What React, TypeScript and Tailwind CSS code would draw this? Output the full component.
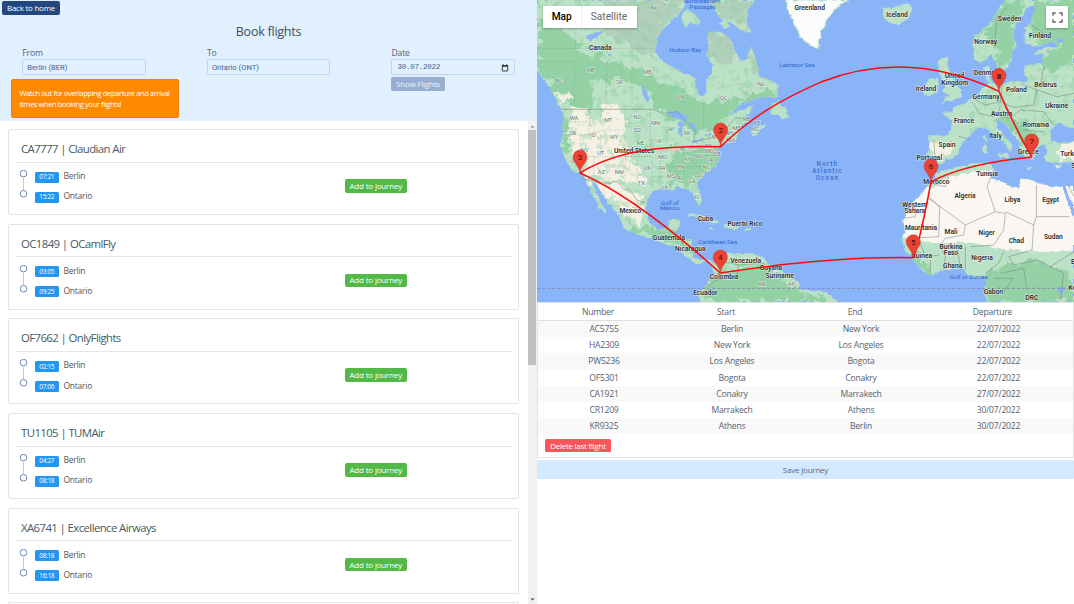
import React from "react";

type Flight = { code: string; airline: string; dep: string; arr: string };

const flights: Flight[] = [
  { code: "CA7777", airline: "Claudian Air", dep: "07:21", arr: "15:22" },
  { code: "OC1849", airline: "OCamlFly", dep: "03:05", arr: "09:25" },
  { code: "OF7662", airline: "OnlyFlights", dep: "02:15", arr: "07:06" },
  { code: "TU1105", airline: "TUMAir", dep: "04:27", arr: "08:18" },
  { code: "XA6741", airline: "Excellence Airways", dep: "08:18", arr: "16:18" },
];

const journey = [
  ["AC5755", "Berlin", "New York", "22/07/2022"],
  ["HA2309", "New York", "Los Angeles", "22/07/2022"],
  ["PW5236", "Los Angeles", "Bogota", "22/07/2022"],
  ["OF5301", "Bogota", "Conakry", "22/07/2022"],
  ["CA1921", "Conakry", "Marrakech", "27/07/2022"],
  ["CR1209", "Marrakech", "Athens", "30/07/2022"],
  ["KR9325", "Athens", "Berlin", "30/07/2022"],
];

function Stop({ time, city }: { time: string; city: string }) {
  return (
    <div className="flex h-[20.2px] items-start">
      <span className="mt-[1.5px] flex h-[11px] w-[24.5px] items-center justify-center rounded-[1.5px] bg-[#2196f3] text-[6.5px] tracking-[-0.35px] text-white">
        {time}
      </span>
      <span className="ml-[4.5px] text-[8.5px] leading-[12px] tracking-[-0.25px] text-[#565656]">{city}</span>
    </div>
  );
}

function FlightCard({ f }: { f: Flight }) {
  return (
    <article className="mb-[8.7px] h-[86px] shrink-0 rounded-[2px] border border-[#e3e3e3] bg-white px-[6px]">
      <h2 className="h-[32.5px] border-b border-[#e6e6e6] pl-[6px] pt-[11px] text-[11.4px] leading-[16px] tracking-[-0.6px] text-[#455a64]">
        {f.code} | {f.airline}
      </h2>
      <div className="flex pt-[7.5px]">
        <svg className="ml-[4px] h-[30px] w-[9px]" viewBox="0 0 9 30" fill="white" stroke="#6b86b5">
          <path d="M4.5 8V20" stroke="#c9c9c9" />
          <circle cx="4.5" cy="3.6" r="3.3" />
          <circle cx="4.5" cy="23.8" r="3.3" />
        </svg>
        <div className="ml-[6.5px] w-[310px]">
          <Stop time={f.dep} city="Berlin" />
          <Stop time={f.arr} city="Ontario" />
        </div>
        <button className="mt-[9px] h-[13.5px] w-[62.5px] rounded-[2px] bg-[#52b947] text-[8px] font-medium leading-[12px] tracking-[-0.18px] text-white">
          Add to journey
        </button>
      </div>
    </article>
  );
}

function Field({ label, children }: { label: string; children: React.ReactNode }) {
  return (
    <div className="w-[184.6px] shrink-0">
      <div className="h-[12px] text-[8.6px] leading-[12px] tracking-[-0.15px] text-[#566573]">{label}</div>
      {children}
    </div>
  );
}

const inputClass =
  "flex h-[16px] w-[123.5px] items-center rounded-[1.5px] border border-[#c2d5e8] pl-[4px] pt-[1px] text-[7.6px] text-[#486491]";

const land = [
  "M0 0H450L440 20L420 50L385 80L370 98L360 120L355 160L375 185L405 200L430 215L475 235L480 275L495 293L508 270L505 240L525 220V190L510 170L515 140L512 95H550L570 110L585 125L595 150L610 180L630 175L640 140L652 160L660 190L665 225L700 240L725 255L720 290L670 292L640 300L600 320L575 345L610 330L650 318L642 338L620 350L635 365L612 378L604 398L600 415L580 425L548 440L540 455L545 480L533 500L510 520L487 540L480 552L490 575L495 605L485 618L475 600L470 580L450 568L420 562L405 572L380 565L345 575L330 600L325 630L340 670L365 690L390 685L395 662L430 656L426 685L410 702L430 713L465 722L462 745L470 778L495 780L520 777L530 795L528 808L517 792L500 785L490 792L470 787L445 768L435 757L420 740L390 735L370 725L335 715L300 705L264 687L255 665L240 640L215 610L195 580L178 552L163 545L180 582L195 612L212 636L205 640L186 622L168 590L153 556L140 535L130 520L108 515L100 500L82 475L72 440L75 400L80 360L75 335L60 308L40 268L22 240L0 213Z",
  "M515 0H655L632 27L628 60L641 98L622 94L600 82L580 65L560 68L540 42L530 20Z",
  "M432 45L449 27L470 40L493 65L478 75L460 65L450 80L438 70Z",
  "M545 70L568 64L580 80L562 86Z",
  "M642 390L690 369L684 382L650 408Z",
  "M700 322L722 302L730 318L746 322L755 350L738 358L722 344L702 345Z",
  "M450 645L480 640L505 650L530 660L548 669L525 670L500 656Z M562 672L590 673L612 682L590 688L563 683Z M622 685L641 685V691L622 690Z M516 681L532 685L522 690Z",
  "M530 795L542 775L570 755L590 760L640 760L680 772L695 795L725 808L760 828L789 850L784 868L805 872L860 876L892 895L905 906H490L486 885L500 865L510 850L530 825Z",
  "M1034 23L1062 25L1088 14L1116 10L1130 32L1114 55L1082 76L1054 67L1038 47Z",
  "M1204 177L1236 169L1231 195L1246 228L1269 265L1274 288L1248 302L1210 308L1237 286L1214 273L1228 258L1218 240L1205 215Z",
  "M1176 236L1203 234V277L1168 291L1160 266Z",
  "M1611 0H1404L1379 40L1349 80L1314 105L1307 140L1313 178L1334 190L1362 166L1375 180L1384 213L1402 216L1420 190L1424 158L1440 137L1429 110L1434 78L1454 50L1469 23L1498 14L1484 65L1464 85L1463 130L1494 142L1544 125L1564 137L1503 150L1493 165L1520 158L1518 191L1464 195L1458 221L1474 235L1463 250L1444 242L1408 250L1390 256L1364 248L1349 237L1338 205L1360 192L1358 225L1366 246L1340 262L1304 292L1284 310L1254 320L1244 336L1214 338L1244 360L1242 390L1230 406H1174L1177 440L1168 474L1180 485L1208 493L1238 478L1264 462L1268 440L1286 420L1304 397L1324 382L1350 386L1370 409L1402 427L1420 455L1428 441L1405 410L1378 380L1380 358L1406 373L1424 400L1443 423L1450 451L1462 472L1492 476L1502 443L1522 432L1534 457L1520 470L1530 485L1562 488L1611 486V424L1570 429L1539 420L1538 394L1563 369L1611 389Z",
  "M1182 545L1204 520L1235 507L1304 491L1359 488L1368 505L1361 533L1404 549L1445 568L1454 535L1484 544L1508 552L1564 560H1611V906H1355L1339 880L1350 852L1344 830L1324 835L1294 825L1274 804L1224 810L1184 825L1160 817L1132 785L1104 750L1094 720L1104 697L1099 660L1114 630L1134 600L1156 578Z",
  "M1348 432L1338 412L1348 405Z M1349 434L1350 458L1340 460L1338 435Z M1382 463L1416 459L1412 476L1390 471Z M1470 499L1492 503L1470 506Z M1552 498L1579 491L1560 507Z",
];

const forest = [
  "M0 65L55 80L105 120L155 165L220 175L280 205L340 215L360 245L410 255L450 280L500 315L600 292L700 265L716 284L620 310L560 360L500 400L460 385L410 355L350 330L350 285L300 250L230 235L170 245L155 285L175 320L145 350L105 322L70 300L30 245L0 205Z",
  "M475 438L550 440L540 485L505 520L485 540L405 552L390 510L410 465Z",
  "M75 355L92 350L98 450L82 470Z",
  "M112 500L126 498L132 514L116 512Z",
  "M265 670L340 680L440 710L460 725L460 760L430 730L370 718L290 700Z",
  "M520 835L600 800L690 800L800 885L880 885V906H500Z",
  "M1334 90L1404 0L1464 18L1430 65L1434 125L1415 198L1384 190L1372 140Z",
  "M1474 90L1490 10L1611 0V190L1520 220L1518 170L1580 130L1510 132Z",
  "M1340 820L1410 790L1500 780L1570 820L1611 840V906H1360Z",
  "M1103 748L1150 760L1180 815L1163 815Z",
  "M1374 350L1420 355L1480 360L1500 420L1450 440L1420 390Z",
];

const beige = [
  "M105 325L150 325L160 365L200 345L185 315L230 310L268 350L262 400L272 430L280 490L325 520L315 565L275 545L225 540L185 530L150 535L130 510L104 470L95 420Z",
  "M160 548L240 548L310 590L325 630L310 670L260 635L210 590Z",
  "M50 280L90 284L110 300L95 310L65 300Z",
  "M1178 430L1230 428L1252 438L1238 465L1205 480L1180 470Z",
  "M1540 437L1611 428V475L1565 480Z",
];

const frost = [
  "M210 0H450L430 30L385 78L355 140L370 190L335 165L290 145L220 105L160 70Z",
  "M512 95H555L590 130L595 155L570 185L510 190Z",
  "M655 160L665 220L720 250L690 250L650 210L640 170Z",
  "M515 0H655L632 27L628 60L641 98L580 65L560 68Z",
];

const borders =
  "M74 328H350L375 340L420 335L475 395L470 425L520 415L560 395L595 352L615 355M135 535L190 548L225 550L230 545L245 547L262 570L275 565L300 600L325 608M388 705L385 730M430 720L440 735M560 760L560 785L605 795L600 830L540 840L500 865M605 795L680 790L710 820L760 825 M1396 250L1390 305L1430 322L1490 315L1500 270L1450 250M1390 305L1345 315L1308 295M1390 320L1380 345L1420 355L1450 330M1310 310L1325 340L1370 350M1264 408L1300 420M1190 420L1195 480M1450 330L1520 335L1550 375M1460 390L1520 395M1440 385L1455 425M1500 270L1560 290L1611 280M1520 200L1510 260M1372 140L1380 60L1410 20M1484 75L1540 115M1180 550L1225 560L1235 530M1175 595L1285 675L1375 635L1350 560L1362 530M1180 595L1208 620L1205 710L1120 715M1100 655L1135 650V620L1172 615V595M1285 675L1280 705L1225 715L1208 735M1375 635L1405 640L1400 690L1370 735L1300 740M1405 635L1490 675L1485 750L1415 770M1498 555V650H1598M1498 650L1490 675M1208 735L1225 770L1220 810M1260 740L1270 800M1285 740L1285 810M1345 820L1385 790L1400 755M1415 770L1430 795L1500 780L1540 800L1611 755M1150 730L1165 770L1208 765M1180 780V820M1390 820L1460 805L1470 870M1370 835H1430L1400 875M1540 800L1580 820L1570 900M1590 550L1611 590M1105 720L1125 740L1150 730";

const provinces =
  "M113 328V185L0 185M208 328V180M285 328V145M0 145H355M350 290L405 215M350 290V328M116 0V145M230 60L290 145M500 300V390M112 365H150V328M160 328L155 405H72M155 405L200 390H265V328M190 405V440M130 405V460M265 440H340M265 380H345M265 470H345M340 328V450M262 400V460M155 470H265M170 470V540M265 460V550M265 470H345M300 480V520M345 480V560M370 450V540M345 420H390M390 390V430M405 435V500M440 435V470M390 500H520M400 510V570M420 510V560M440 510V560M345 530H390M460 480L510 520M475 440H540M560 400V430M650 155L660 190M540 265L620 250L660 290";

const labels: [number, number, string][] = [
  [190, 150, "Canada"], [291, 459, "United States"], [280, 639, "Mexico"], [505, 662, "Cuba"],
  [624, 679, "Puerto Rico"], [396, 719, "Guatemala"], [460, 753, "Nicaragua"], [626, 789, "Venezuela"],
  [561, 837, "Colombia"], [702, 811, "Guyana"], [728, 835, "Suriname"], [505, 885, "Ecuador"],
  [818, 30, "Greenland"], [1080, 50, "Iceland"], [1418, 62, "Sweden"], [1346, 132, "Norway"],
  [1509, 113, "Finland"], [1351, 225, "Denmark"], [1252, 234, "United"], [1253, 254, "Kingdom"],
  [1167, 273, "Ireland"], [1347, 297, "Germany"], [1438, 276, "Poland"], [1526, 260, "Belarus"],
  [1559, 325, "Ukraine"], [1394, 347, "Austria"], [1281, 369, "France"], [1497, 381, "Romania"],
  [1375, 414, "Italy"], [1230, 441, "Spain"], [1474, 463, "Greece"], [1600, 469, "Turkey"],
  [1177, 479, "Portugal"], [1350, 527, "Tunisia"], [1198, 552, "Morocco"], [1284, 594, "Algeria"],
  [1426, 606, "Libya"], [1541, 606, "Egypt"], [1133, 620, "Western"], [1133, 640, "Sahara"],
  [1152, 690, "Mauritania"], [1242, 701, "Mali"], [1349, 705, "Niger"], [1438, 729, "Chad"],
  [1549, 717, "Sudan"], [1242, 746, "Burkina"], [1242, 766, "Faso"], [1154, 773, "Guinea"],
  [1335, 781, "Nigeria"], [1247, 803, "Ghana"], [1369, 881, "Gabon"], [1485, 899, "DRC"],
  [1622, 869, "Kenya"], [1608, 791, "E"], [1609, 504, "S"],
];

const seas: [number, number, string][] = [
  [495, 9, "Northwestern"], [497, 26, "Passages"], [445, 157, "Hudson Bay"], [780, 202, "Labrador Sea"],
  [398, 614, "Gulf of"], [398, 631, "Mexico"], [542, 732, "Caribbean Sea"], [1295, 837, "Gulf of Guinea"],
];

const codes: [number, number, string][] = [
  [353, 30, "NU"], [66, 249, "BC"], [161, 217, "AB"], [248, 253, "SK"], [331, 222, "MB"], [430, 297, "ON"],
  [560, 301, "QC"], [673, 259, "NL"], [628, 364, "NB"], [660, 374, "PE"], [653, 394, "NS"], [111, 360, "WA"],
  [214, 365, "MT"], [301, 358, "ND"], [356, 374, "MN"], [403, 394, "WI"], [451, 406, "MI"], [598, 391, "ME"],
  [535, 418, "NY"], [576, 406, "NH"], [581, 426, "MA"], [107, 406, "OR"], [168, 411, "ID"], [231, 418, "WY"],
  [301, 397, "SD"], [310, 436, "NE"], [366, 429, "IA"], [403, 444, "IL"], [435, 453, "IN"], [469, 448, "OH"],
  [515, 445, "PA"], [517, 460, "MD"], [541, 468, "DE"], [143, 457, "NV"], [191, 466, "UT"], [376, 476, "MO"],
  [452, 483, "KY"], [487, 475, "WV"], [518, 487, "VA"], [508, 508, "NC"], [431, 506, "TN"], [375, 511, "AR"],
  [331, 509, "OK"], [193, 522, "AZ"], [247, 522, "NM"], [313, 556, "TX"], [402, 534, "MS"], [431, 541, "AL"],
  [465, 549, "GA"], [490, 532, "SC"], [383, 567, "LA"], [481, 597, "FL"], [113, 489, "CA"], [674, 857, "RR"], [764, 857, "AP"],
];

const pins: [number, number, string][] = [
  [551, 438, "2"], [129, 519, "3"], [550, 819, "4"], [1129, 773, "5"], [1182, 546, "6"], [1484, 471, "7"], [1386, 274, "8"],
];

function WorldMap() {
  return (
    <svg className="block h-[302px] w-[537px]" viewBox="0 0 1611 906" fontFamily="Roboto, 'Liberation Sans', sans-serif">
      <defs>
        <clipPath id="landClip"><path d={land.join(" ")} /></clipPath>
        <filter id="rough" x="-5%" y="-5%" width="110%" height="110%" colorInterpolationFilters="sRGB">
          <feTurbulence type="fractalNoise" baseFrequency="0.035" numOctaves="4" seed="4" />
          <feDisplacementMap in="SourceGraphic" scale="55" xChannelSelector="R" yChannelSelector="G" />
        </filter>
        <filter id="coast" x="-2%" y="-2%" width="104%" height="104%" colorInterpolationFilters="sRGB">
          <feTurbulence type="fractalNoise" baseFrequency="0.06" numOctaves="3" seed="9" />
          <feDisplacementMap in="SourceGraphic" scale="13" xChannelSelector="R" yChannelSelector="G" />
        </filter>
        <filter id="speckle" x="0" y="0" width="100%" height="100%" colorInterpolationFilters="sRGB">
          <feTurbulence type="fractalNoise" baseFrequency="0.045" numOctaves="4" seed="12" />
          <feColorMatrix values="0 0 0 0 0.55  0 0 0 0 0.81  0 0 0 0 0.63  9 0 0 0 -5" />
        </filter>
      </defs>
      <rect width="1611" height="906" fill="#8ab4f8" />
      <g filter="url(#coast)">
        <path d={land.join(" ")} fill="#bbe2c6" />
        <path d="M745 0L757 40L772 70L790 110L808 130L844 145L852 100L869 60L900 20L935 0Z" fill="#fcfcfc" stroke="#b5dfc4" strokeWidth="3" />
        <g clipPath="url(#landClip)">
          <g filter="url(#rough)">
            {frost.map((d) => <path key={d} d={d} fill="#b1cfba" />)}
            {forest.map((d) => <path key={d} d={d} fill="#94d2a5" />)}
            {beige.map((d) => <path key={d} d={d} fill="#f5f0e4" />)}
          </g>
          <path d="M1060 570L1190 560L1235 530L1350 510L1611 500V752L1540 757L1400 748L1300 727L1200 730L1085 710Z" fill="#faf7f2" />
          <path d="M1180 545L1200 515L1340 480L1360 500L1240 528L1210 550Z" fill="#bbe2c6" />
          <rect width="1000" height="906" filter="url(#speckle)" opacity="0.4" />
          <rect x="1300" width="311" height="430" filter="url(#speckle)" opacity="0.4" />
        </g>
        <g fill="#8ab4f8">
          <path d="M384 340L420 333L455 350L445 365L408 352Z" />
          <path d="M425 370L442 365L432 415L424 405Z" />
          <path d="M450 365L475 375L485 395L468 390Z" />
          <path d="M465 423L500 411L497 417L470 429Z" />
          <path d="M500 405L525 399V405L502 410Z" />
          <path d="M313 255L326 270L338 298L332 305L318 285Z" />
          <path d="M147 113L175 97L200 92L180 115L160 124Z" />
          <path d="M200 170L230 158L222 165Z" />
          <path d="M165 28L192 20L215 38L190 48Z" />
          <path d="M1556 118L1580 112L1578 133Z" />
          <path d="M1563 862L1582 862L1575 880H1563Z" />
          <path d="M1576 560L1584 556L1600 600L1611 625V650L1596 615Z" />
        </g>
      </g>
      <path d={provinces} fill="none" stroke="#7d9a86" strokeWidth="1.8" strokeDasharray="4 4" opacity="0.75" />
      <path d={borders} fill="none" stroke="#7d8580" strokeWidth="2.2" opacity="0.75" strokeLinejoin="round" />
      <path d="M0 865H1611" stroke="#8b80a8" strokeWidth="2.5" strokeDasharray="10 5" />
      <g fontSize="17" textAnchor="middle" fill="#62756b" stroke="#f4faf4" strokeWidth="3" strokeOpacity="0.8" paintOrder="stroke">
        {codes.map(([x, y, t]) => <text key={t} x={x} y={y}>{t}</text>)}
      </g>
      <g fontSize="18" fontWeight="400" textAnchor="middle" fill="#2f68cf">
        {seas.map(([x, y, t]) => <text key={t + x} x={x} y={y}>{t}</text>)}
      </g>
      <g fontSize="19" fontWeight="500" textAnchor="middle" fill="#3a6fcf" letterSpacing="3.2">
        <text x="871" y="497">North</text>
        <text x="871" y="518">Atlantic</text>
        <text x="871" y="540">Ocean</text>
      </g>
      <g fontSize="20" fontWeight="600" textAnchor="middle" fill="#2b2b2b" stroke="#ffffff" strokeWidth="3" strokeOpacity="0.7" paintOrder="stroke">
        {labels.map(([x, y, t]) => <text key={t + x} x={x} y={y}>{t}</text>)}
      </g>
      <path
        d="M1386 274C1200 185 1020 180 850 247C740 295 650 345 551 440C400 436 250 445 129 519C280 585 440 720 550 819C740 790 950 770 1129 773C1145 735 1168 620 1182 546C1265 500 1380 482 1484 471C1450 410 1417 345 1386 274"
        fill="none" stroke="#ff0000" strokeWidth="4.6" strokeOpacity="0.95" strokeLinejoin="round"
      />
      {pins.map(([x, y, n]) => (
        <g key={n} transform={`translate(${x} ${y})`}>
          <path d="M0 0C-2-22-21-30-21-48A21 21 0 0 1 21-48C21-30 2-22 0 0Z" fill="#ea4335" stroke="#c5362a" strokeWidth="1.5" />
          <text y="-38" textAnchor="middle" fontSize="24" fontWeight={n === "8" ? 700 : 400} fill="#3b0d0a">{n}</text>
        </g>
      ))}
    </svg>
  );
}

export default function App() {
  return (
    <div className="flex h-[604px] w-[1074px] overflow-hidden bg-white font-['Open_Sans','Noto_Sans',sans-serif]">
      <section className="flex w-[537px] shrink-0 flex-col">
        <header className="h-[121px] shrink-0 bg-[#e0f0ff] pt-[1px]">
          <button className="ml-[2px] block h-[14px] w-[58px] rounded-[2px] bg-[#234781] text-[7.9px] font-medium leading-[14px] tracking-[-0.2px] text-white">
            Back to home
          </button>
          <h1 className="mt-[7.5px] h-[25px] text-center text-[12.6px] leading-[18px] tracking-[-0.28px] text-[#424f5a]">Book flights</h1>
          <div className="-mt-[0.5px] flex pl-[22.3px]">
            <Field label="From"><div className={inputClass + " font-['Roboto',sans-serif]"}>Berlin (BER)</div></Field>
            <Field label="To"><div className={inputClass + " font-['Roboto',sans-serif]"}>Ontario (ONT)</div></Field>
            <Field label="Date">
              <div className={inputClass + " justify-between pr-[5px] font-['Liberation_Mono',monospace]"}>
                <span className="pl-[1px] tracking-[-0.3px]">30.07.2022</span>
                <svg className="h-[8px] w-[8px]" viewBox="0 0 8 8" fill="none" stroke="#1a1a1a">
                  <path d="M1.3 1.8H6.7V7H1.3Z" strokeWidth="0.8" />
                  <path d="M1 2H7M2.3.5V2M5.7.5V2" strokeWidth="1.1" />
                </svg>
              </div>
            </Field>
          </div>
          <div className="flex justify-between pl-[11px] pr-[92px]">
            <div className="mt-[4px] h-[39px] w-[168px] rounded-[2px] border border-[#ee7f00] bg-[#ff8a00] pl-[7.5px] pt-[7.5px] text-[7.5px] font-medium leading-[11.3px] text-white">
              <div className="whitespace-nowrap tracking-[-0.37px]">Watch out for overlapping departure and arrival</div>
              <div className="whitespace-nowrap tracking-[-0.37px]">times when booking your flights!</div>
            </div>
            <button className="mt-[2px] h-[13.5px] w-[54px] rounded-[2px] bg-[#97aed0] text-[8px] font-medium leading-[13px] tracking-[-0.22px] text-[#eaf2fc]">
              Show Flights
            </button>
          </div>
        </header>
        <div className="flex min-h-0 flex-1">
          <div className="flex w-[527.5px] flex-col overflow-hidden pl-[8px] pr-[8.5px] pt-[8px]">
            {flights.map((f) => <FlightCard key={f.code} f={f} />)}
            <div className="h-[20px] shrink-0 rounded-[2px] border border-[#e3e3e3]" />
          </div>
          <div className="flex w-[9.5px] flex-col items-center bg-[#f1f1f1] pb-[3px] pt-[4px]">
            <svg className="h-[3px] w-[5px]" viewBox="0 0 5 3"><path d="M.5 2.5L2.5.5L4.5 2.5Z" fill="#8c8c8c" /></svg>
            <div className="mt-[2px] h-[235px] w-[8px] bg-[#c1c1c1]" />
            <svg className="mt-auto h-[3px] w-[5px]" viewBox="0 0 5 3"><path d="M.5.5L2.5 2.5L4.5.5Z" fill="#404040" /></svg>
          </div>
        </div>
      </section>

      <section className="w-[537px] shrink-0">
        <div className="relative h-[302px] overflow-hidden">
          <WorldMap />
          <div className="absolute left-[6px] top-[6px] flex h-[22px] bg-white font-['Roboto',sans-serif] text-[10.2px] leading-[22px] shadow-[0_1px_2px_rgba(0,0,0,0.3)]">
            <div className="w-[38.5px] border-r border-[#eee] text-center font-medium text-black">Map</div>
            <div className="w-[55px] text-center text-[#666]">Satellite</div>
          </div>
          <div className="absolute right-[6px] top-[6px] flex h-[22px] w-[22px] items-center justify-center bg-white shadow-[0_1px_2px_rgba(0,0,0,0.3)]">
            <svg className="h-[11px] w-[11px]" viewBox="0 0 11 11" fill="none" stroke="#666" strokeWidth="1.4">
              <path d="M1 3.8V1H3.8M7.2 1H10V3.8M10 7.2V10H7.2M3.8 10H1V7.2" />
            </svg>
          </div>
        </div>
        <div className="h-[156px] border border-[#e3e3e3] text-[8.6px] tracking-[-0.22px] text-[#566270]">
          <div className="grid h-[18px] grid-cols-[132px_124px_134px_141px] border-b border-[#e0e0e0] text-center leading-[18px]">
            <div className="pr-[12px]">Number</div>
            <div className="pr-[12px]">Start</div>
            <div className="pr-[12px]">End</div>
            <div className="pr-[12px]">Departure</div>
          </div>
          {journey.map((row, i) => (
            <div
              key={row[0]}
              className={
                "grid h-[16.2px] grid-cols-[132px_124px_134px_141px] text-center leading-[17px] " +
                (i % 2 === 0 ? "bg-[#f9f9f9]" : "bg-white")
              }
            >
              {row.map((cell) => <div key={cell}>{cell}</div>)}
            </div>
          ))}
          <button className="ml-[7px] mt-[4.5px] block h-[13.5px] w-[66px] rounded-[1.5px] bg-[#fa5659] text-[7.9px] font-medium leading-[14px] tracking-[-0.22px] text-white">
            Delete last flight
          </button>
        </div>
        <button className="mt-[2px] block h-[19px] w-full rounded-[1.5px] bg-[#d2e9ff] text-[8px] leading-[19px] tracking-[-0.22px] text-[#566b80]">
          Save Journey
        </button>
      </section>
    </div>
  );
}
